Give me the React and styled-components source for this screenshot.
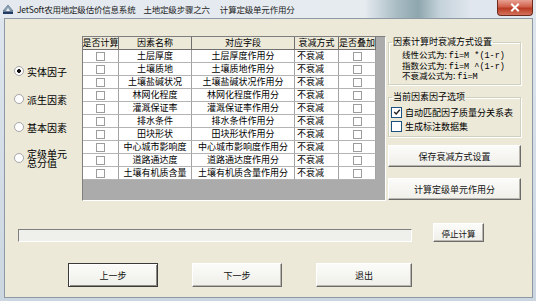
import React from "react";
import styled, { createGlobalStyle } from "styled-components";

const GlobalStyle = createGlobalStyle`
  html, body {
    margin: 0;
    padding: 0;
    overflow: hidden;
    background: #d4dde6;
  }
  body {
    font-family: "Noto Sans CJK SC", "Liberation Sans", sans-serif;
    color: #000;
  }
`;

const factors = [
  "土层厚度",
  "土壤质地",
  "土壤盐碱状况",
  "林网化程度",
  "灌溉保证率",
  "排水条件",
  "田块形状",
  "中心城市影响度",
  "道路通达度",
  "土壤有机质含量",
];

const modes = ["实体因子", "派生因素", "基本因素", "定级单元\n总分值"];

function App() {
  return (
    <Window>
      <GlobalStyle />
      <TitleBar>
        <AppIcon viewBox="0 0 12 12">
          <path d="M1 8 L6 2 L11 8 Z" fill="#8fa3b8" stroke="#4b5e73" strokeWidth="0.6" />
          <path d="M4 8 L6 5 L8 8 Z" fill="#e8eef4" />
          <rect x="1" y="8.5" width="10" height="2.5" fill="#233a63" />
        </AppIcon>
        <TitleText>
          JetSoft农用地定级估价信息系统
          <TitlePart>土地定级步骤之六</TitlePart>
          <TitlePart $wide>计算定级单元作用分</TitlePart>
        </TitleText>
        <Glass />
        <CloseButton>
          <svg width="10" height="9" viewBox="0 0 10 9">
            <path d="M2 1.5 L8 7.5 M8 1.5 L2 7.5" stroke="#fff" strokeWidth="2" strokeLinecap="square" />
          </svg>
        </CloseButton>
      </TitleBar>

      <Client>
        <MainRow>
          <RadioColumn>
            {modes.map((m, i) => (
              <RadioItem key={m}>
                <Radio $checked={i === 0} />
                <RadioLabel>{m}</RadioLabel>
              </RadioItem>
            ))}
          </RadioColumn>

          <DataGrid>
            <GridTable>
              <HeadCell>是否计算</HeadCell>
              <HeadCell>因素名称</HeadCell>
              <HeadCell>对应字段</HeadCell>
              <HeadCell>衰减方式</HeadCell>
              <HeadCell>是否叠加</HeadCell>
              {factors.map((f) => (
                <React.Fragment key={f}>
                  <Cell $center>
                    <CellCheck />
                  </Cell>
                  <Cell $center>{f}</Cell>
                  <Cell $center>{f}作用分</Cell>
                  <Cell>不衰减</Cell>
                  <Cell $center>
                    <CellCheck />
                  </Cell>
                </React.Fragment>
              ))}
            </GridTable>
          </DataGrid>

          <RightPanel>
            <GroupBox $height={48}>
              <Legend>因素计算时衰减方式设置</Legend>
              <Formulas>
                <Formula>
                  线性公式为: <Mono>fi=M *(1-r)</Mono>
                </Formula>
                <Formula>
                  指数公式为: <Mono>fi=M ^(1-r)</Mono>
                </Formula>
                <Formula>
                  不衰减公式为: <Mono>fi=M</Mono>
                </Formula>
              </Formulas>
            </GroupBox>

            <GroupBox $height={45} $gap={7}>
              <Legend>当前因素因子选项</Legend>
              <Options>
                <OptionRow>
                  <CheckBox $checked>
                    <svg width="8" height="8" viewBox="0 0 8 8">
                      <path d="M1.2 4 L3.2 6 L6.8 1.8" fill="none" stroke="#222" strokeWidth="1.4" />
                    </svg>
                  </CheckBox>
                  自动匹配因子质量分关系表
                </OptionRow>
                <OptionRow>
                  <CheckBox />
                  生成标注数据集
                </OptionRow>
              </Options>
            </GroupBox>

            <PanelButton $top={8}>保存衰减方式设置</PanelButton>
            <PanelButton $top={11}>计算定级单元作用分</PanelButton>
          </RightPanel>
        </MainRow>

        <ProgressRow>
          <ProgressBar />
          <SmallButton>停止计算</SmallButton>
        </ProgressRow>

        <ButtonRow>
          <NavButton $default $width={90}>上一步</NavButton>
          <NavButton $width={90}>下一步</NavButton>
          <NavButton $width={96}>退出</NavButton>
        </ButtonRow>
      </Client>
    </Window>
  );
}

export default App;

const Window = styled.div`
  width: 536px;
  height: 301px;
  display: flex;
  flex-direction: column;
  background: linear-gradient(to bottom, #dfe6ee, #cbd6e1);
  box-sizing: border-box;
`;

const TitleBar = styled.div`
  height: 18px;
  display: flex;
  align-items: center;
  padding-left: 2px;
  gap: 3px;
  background: linear-gradient(
    to right,
    #e3e9ef 0%,
    #e6ebf0 68%,
    #a9bcc4 74%,
    #8ea6ad 78%,
    #c4d2da 82%,
    #e1e7ee 88%
  );
`;

const AppIcon = styled.svg`
  width: 12px;
  height: 12px;
  flex: none;
`;

const TitleText = styled.div`
  font-size: 8.5px;
  line-height: 12px;
  color: #1b1b1b;
  white-space: nowrap;
  letter-spacing: -0.2px;
`;

const TitlePart = styled.span`
  margin-left: ${(p) => (p.$wide ? 10 : 8)}px;
`;

const Glass = styled.div`
  flex: 1;
`;

const CloseButton = styled.div`
  align-self: flex-start;
  width: 36px;
  height: 16px;
  margin-right: 3px;
  display: flex;
  align-items: center;
  justify-content: center;
  background: linear-gradient(to bottom, #e8a193 0%, #d0604c 45%, #b83a22 55%, #d4735c 100%);
  border: 1px solid #6e2a1f;
  border-top: none;
  border-radius: 0 0 4px 4px;
  box-sizing: border-box;
`;

const Client = styled.div`
  flex: 1;
  margin: 0 3px 3px 4px;
  background: #ece9d8;
  border: 1px solid #8d99a4;
  display: flex;
  flex-direction: column;
`;

const MainRow = styled.div`
  display: flex;
  padding-top: 17px;
`;

const RadioColumn = styled.div`
  width: 77px;
  display: flex;
  flex-direction: column;
  gap: 16px;
  padding: 29px 0 0 9px;
  box-sizing: border-box;
`;

const RadioItem = styled.div`
  display: flex;
  align-items: center;
  gap: 3px;
  min-height: 12px;
`;

const Radio = styled.span`
  width: 8px;
  height: 8px;
  flex: none;
  border-radius: 50%;
  border: 1px solid #a7a6aa;
  background: ${(p) =>
    p.$checked ? "radial-gradient(circle, #111 0 1.6px, #fff 2.2px)" : "#fff"};
`;

const RadioLabel = styled.span`
  font-size: 10px;
  line-height: 9px;
  white-space: pre-line;
`;

const DataGrid = styled.div`
  width: 304px;
  height: 165px;
  box-sizing: border-box;
  background: #ababab;
  border: 1px solid;
  border-color: #7f7f7f #ffffff #ffffff #7f7f7f;
  overflow: hidden;
`;

const GridTable = styled.div`
  display: grid;
  grid-template-columns: 36px 73px 103px 44px 37px;
  grid-auto-rows: 13px;
  width: 293px;
  background: #fff;
`;

const HeadCell = styled.div`
  background: #ece9d8;
  border-right: 1px solid #6f6f6f;
  border-bottom: 1px solid #6f6f6f;
  font-size: 9px;
  line-height: 12px;
  text-align: center;
  white-space: nowrap;
  overflow: hidden;
  display: flex;
  justify-content: center;
`;

const Cell = styled.div`
  border-right: 1px solid #a3a3a3;
  border-bottom: 1px solid #b4b4b4;
  font-size: 9px;
  line-height: 12px;
  white-space: nowrap;
  overflow: hidden;
  display: flex;
  align-items: center;
  justify-content: ${(p) => (p.$center ? "center" : "flex-start")};
  padding-left: ${(p) => (p.$center ? 0 : 2)}px;
`;

const CellCheck = styled.span`
  width: 7px;
  height: 7px;
  border: 1px solid #9c9c9c;
  background: #fff;
`;

const RightPanel = styled.div`
  width: 133px;
  margin-left: 2px;
  padding-top: 1px;
  display: flex;
  flex-direction: column;
`;

const GroupBox = styled.fieldset`
  margin: ${(p) => p.$gap || 0}px 0 0 0;
  padding: 0;
  height: ${(p) => p.$height}px;
  box-sizing: border-box;
  border: 1px solid #d0d0bf;
  box-shadow: inset 1px 1px 0 #fff, 1px 1px 0 #fff;
  min-width: 0;
`;

const Legend = styled.legend`
  font-size: 9px;
  line-height: 10px;
  padding: 0 1px;
  margin-left: 3px;
  white-space: nowrap;
`;

const Formulas = styled.div`
  padding: 3px 0 0 13px;
`;

const Formula = styled.div`
  font-size: 8.5px;
  line-height: 8.5px;
  white-space: nowrap;
`;

const Mono = styled.span`
  font-family: "Liberation Mono", monospace;
  font-size: 8.5px;
`;

const Options = styled.div`
  padding: 3px 0 0 2px;
`;

const OptionRow = styled.div`
  height: 14px;
  display: flex;
  align-items: center;
  gap: 3px;
  font-size: 9px;
  white-space: nowrap;
`;

const CheckBox = styled.span`
  width: 9px;
  height: 9px;
  flex: none;
  border: 1px solid #1c5180;
  background: #fff;
  display: flex;
  align-items: center;
  justify-content: center;
`;

const buttonFace = `
  box-sizing: border-box;
  background: linear-gradient(to bottom, #fbfbf9, #f0efe9);
  border: 1px solid;
  border-color: #ffffff #6b6b6b #6b6b6b #ffffff;
  box-shadow: inset -1px -1px 0 #b9b7ad;
  font-family: "Noto Sans CJK SC", sans-serif;
  color: #111;
  display: flex;
  align-items: center;
  justify-content: center;
  white-space: nowrap;
`;

const PanelButton = styled.div`
  ${buttonFace}
  margin-top: ${(p) => p.$top}px;
  height: 22px;
  width: 133px;
  font-size: 9px;
`;

const ProgressRow = styled.div`
  display: flex;
  align-items: flex-end;
  gap: 21px;
  margin-top: 22px;
  padding-left: 13px;
`;

const ProgressBar = styled.div`
  width: 394px;
  height: 13px;
  box-sizing: border-box;
  background: #efefec;
  border: 1px solid;
  border-color: #7f7f7f #ffffff #ffffff #7f7f7f;
`;

const SmallButton = styled.div`
  ${buttonFace}
  width: 51px;
  height: 19px;
  font-size: 8.5px;
`;

const ButtonRow = styled.div`
  display: flex;
  gap: 34px;
  margin-top: 21px;
  padding-left: 63px;
`;

const NavButton = styled.div`
  ${buttonFace}
  width: ${(p) => p.$width}px;
  height: 24px;
  font-size: 9px;
  ${(p) =>
    p.$default &&
    `
    outline: 1px solid #3a3a3a;
    outline-offset: -1px;
    border-color: #3a3a3a #5a5a5a #5a5a5a #3a3a3a;
    box-shadow: inset 1px 1px 0 #fff, inset -1px -1px 0 #8c8a80;
  `}
`;
